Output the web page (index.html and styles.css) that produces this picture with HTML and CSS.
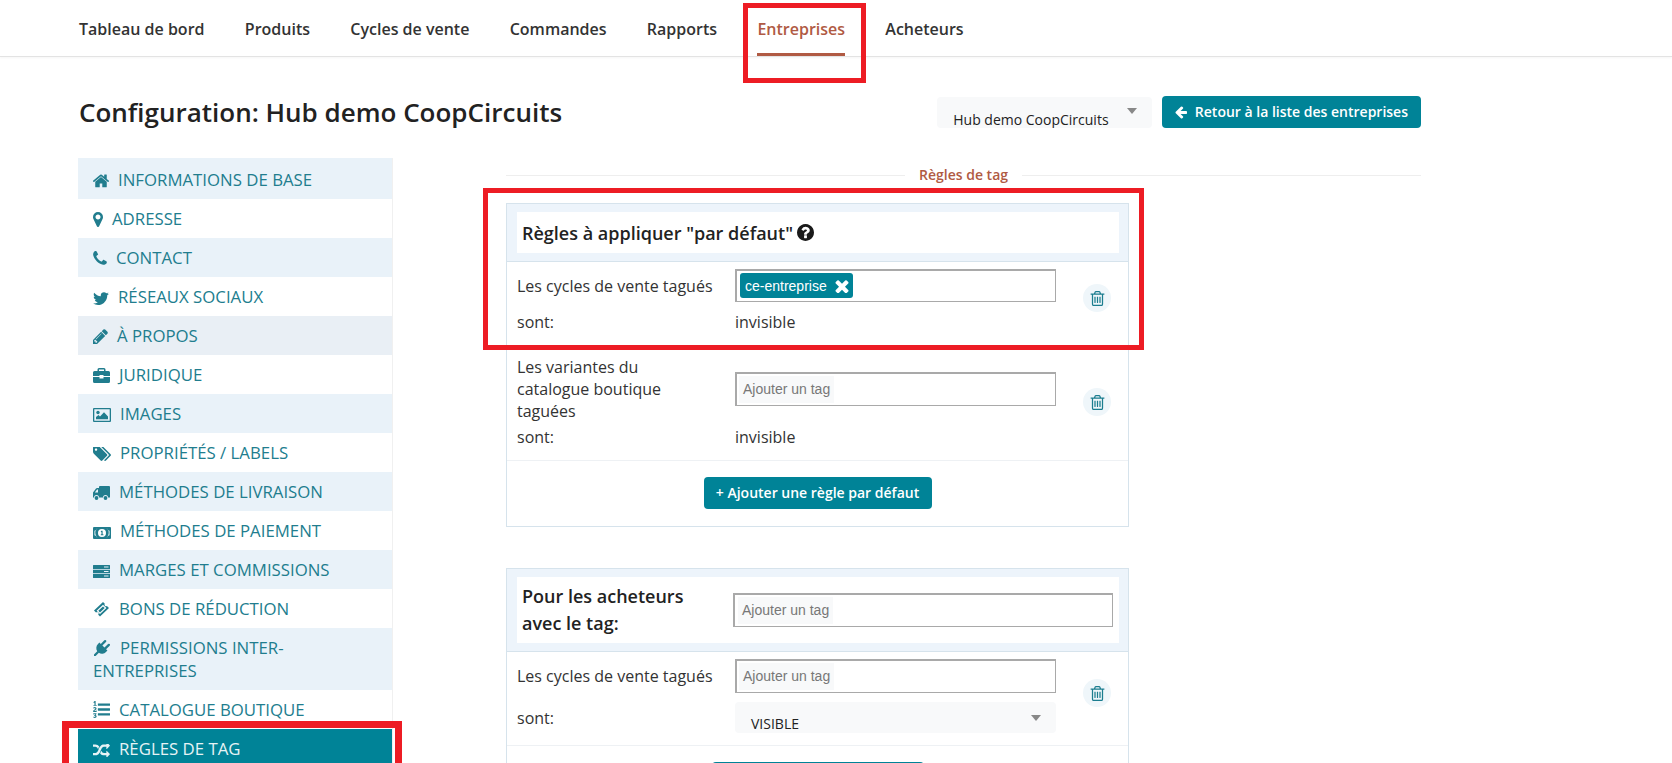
FILE: index.html
```html
<!DOCTYPE html>
<html lang="fr">
<head>
  <meta charset="UTF-8" />
  <meta name="viewport" content="width=device-width, initial-scale=1.0"/>
  <title>Configuration: Hub demo CoopCircuits</title>
  <link rel="stylesheet" href="styles.css">
</head>
<body>

  <nav class="topnav">
    <a href="#">Tableau de bord</a>
    <a href="#">Produits</a>
    <a href="#">Cycles de vente</a>
    <a href="#">Commandes</a>
    <a href="#">Rapports</a>
    <a href="#" class="active">Entreprises</a>
    <a href="#">Acheteurs</a>
  </nav>

  <div class="page">
    <div class="page-head">
      <h1>Configuration: Hub demo CoopCircuits</h1>
      <div class="select select-hub">Hub demo CoopCircuits<span class="caret"></span></div>
      <a href="#" class="btn btn-back">
        <svg width="14" height="14" viewBox="0 0 1792 1792"><path fill="currentColor" d="M1664 896v128q0 53-32.500 90.500t-84.500 37.500h-704l293 294q38 36 38 90t-38 90l-75 76q-37 37-90 37-52 0-91-37l-651-652q-37-37-37-90 0-52 37-91l651-650q38-38 91-38 52 0 90 38l75 74q38 38 38 91t-38 91l-293 293h704q52 0 84.500 37.500t32.500 90.500z"/></svg>
        Retour à la liste des entreprises
      </a>
    </div>

    <div class="columns">
      <ul class="sidemenu">
        <li><a href="#"><svg class="ico" width="16" height="14" viewBox="96 200 1600 1400"><path d="M1472 992v480q0 26-19 45t-45 19h-384v-384h-256v384h-384q-26 0-45-19t-19-45v-480q0-1 .5-3t.5-3l575-474 575 474q1 2 1 6zm223-69l-62 74q-8 9-21 11h-3q-13 0-21-7l-692-577-692 577q-12 8-24 7-13-2-21-11l-62-74q-8-10-7-23.500t11-21.500l719-599q32-26 76-26t76 26l244 204v-195q0-14 9-23t23-9h192q14 0 23 9t9 23v408l219 182q10 8 11 21.500t-7 23.500z"/></svg>Informations de base</a></li>
        <li><a href="#"><svg class="ico" width="10" height="15" viewBox="384 128 1024 1536"><path d="M1152 640q0-106-75-181t-181-75-181 75-75 181 75 181 181 75 181-75 75-181zm256 0q0 109-33 179l-364 774q-16 33-47.500 52t-67.500 19-67.500-19-46.500-52l-365-774q-33-70-33-179 0-212 150-362t362-150 362 150 150 362z"/></svg>Adresse</a></li>
        <li><a href="#"><svg class="ico" width="14" height="15" viewBox="192 128 1408 1536"><path d="M1600 1240q0 27-10 70.500t-21 68.500q-21 50-122 106-94 51-186 51-27 0-53-3.500t-57.500-12.500-47-14.500-55.500-20.500-49-18q-98-35-175-83-127-79-264-216t-216-264q-48-77-83-175-3-9-18-49t-20.500-55.500-14.500-47-12.500-57.500-3.500-53q0-92 51-186 56-101 106-122 25-11 68.500-21t70.500-10q14 0 21 3 18 6 53 76 11 19 30 54t35 63.500 31 53.500q3 4 17.500 25t21.500 35.500 7 28.500q0 20-28.500 50t-62 55-62 53-28.500 46q0 9 5 22.500t8.500 20.500 14 24 11.500 19q76 137 174 235t235 174q2 1 19 11.500t24 14 20.500 8.500 22.500 5q18 0 46-28.500t53-62 55-62 50-28.500q14 0 28.500 7t35.500 21.500 25 17.500q25 15 53.500 31t63.500 35 54 30q70 35 76 53 3 7 3 21z"/></svg>Contact</a></li>
        <li><a href="#"><svg class="ico" width="16" height="13" viewBox="100 240 1600 1300"><path d="M1684 408q-67 98-162 167 1 14 1 42 0 130-38 259.500t-115.500 248.500-184.500 210.500-258 146-323 54.500q-271 0-496-145 35 4 78 4 225 0 401-138-105-2-188-64.500t-114-159.500q33 5 61 5 43 0 85-11-112-23-185.500-111.500t-73.500-205.500v-4q68 38 146 41-66-44-105-115t-39-154q0-88 44-163 121 149 294.500 238.500t371.500 99.500q-8-38-8-74 0-134 94.500-228.500t228.500-94.500q140 0 236 102 109-21 205-78-37 115-142 178 91-10 186-50z"/></svg>Réseaux sociaux</a></li>
        <li class="hover"><a href="#"><svg class="ico" width="15" height="15" viewBox="128 128 1536 1536"><path d="M491 1536l91-91-235-235-91 91v107h128v128h107zm523-928q0-22-22-22-10 0-17 7l-542 542q-7 7-7 17 0 22 22 22 10 0 17-7l542-542q7-7 7-17zm-54-192l416 416-832 832h-416v-416zm683 96q0 53-37 90l-166 166-416-416 166-165q36-38 90-38 53 0 91 38l235 234q37 39 37 91z"/></svg>À propos</a></li>
        <li><a href="#"><svg class="ico" width="17" height="15" viewBox="0 0 17 15"><path d="M6 0h5a1.500 1.500 0 0 1 1.500 1.500V3H11V1.500H6V3H4.500V1.500A1.500 1.500 0 0 1 6 0zM1.500 3h14A1.500 1.500 0 0 1 17 4.500V8H10.500V7h-4v1H0V4.500A1.500 1.500 0 0 1 1.500 3zM0 9h6.500v1.500h4V9H17v4.500a1.500 1.500 0 0 1-1.500 1.500h-14A1.500 1.500 0 0 1 0 13.500z"/></svg>Juridique</a></li>
        <li><a href="#"><svg class="ico" width="18" height="14" viewBox="0 0 18 14"><path fill-rule="evenodd" d="M1 0h16a1 1 0 0 1 1 1v12a1 1 0 0 1-1 1H1a1 1 0 0 1-1-1V1a1 1 0 0 1 1-1zM1.300 1.300v11.400h15.400V1.300z"/><circle cx="5" cy="4.500" r="1.700"/><path d="M3 11.300V9l2.500-2 1.500 1.500 4-4.300 4 4.300v2.800z"/></svg>Images</a></li>
        <li><a href="#"><svg class="ico" width="18" height="14" viewBox="0 192 1900 1450"><path d="M448 448q0-53-37.500-90.500t-90.500-37.500-90.500 37.500-37.500 90.500 37.500 90.500 90.500 37.500 90.500-37.500 37.500-90.500zm1067 576q0 53-37 90l-491 492q-39 37-91 37-53 0-90-37l-715-716q-38-37-64.500-101t-26.500-117v-416q0-52 38-90t90-38h416q53 0 117 26.500t102 64.500l715 714q37 39 37 91zm384 0q0 53-37 90l-491 492q-39 37-91 37-36 0-59-14t-53-45l470-470q37-37 37-90 0-52-37-91l-715-714q-38-38-102-64.500t-117-26.500h224q53 0 117 26.500t102 64.500l715 714q37 39 37 91z"/></svg>Propriétés / Labels</a></li>
        <li><a href="#"><svg class="ico" width="17" height="14" viewBox="0 0 17 14"><path fill-rule="evenodd" d="M7 0h9a1 1 0 0 1 1 1v10.500h-2a2.500 2.500 0 0 0-5 0H6a2.500 2.500 0 0 0-5 0H0V6.500l3-4A1.500 1.500 0 0 1 4.200 2H6V1a1 1 0 0 1 1-1zM5 3.500H4.100L2 6.300v.2h3z"/><circle cx="3.500" cy="12" r="1.900"/><circle cx="12.500" cy="12" r="1.900"/></svg>Méthodes de livraison</a></li>
        <li><a href="#"><svg class="ico" width="18" height="12" viewBox="0 0 18 12"><path fill-rule="evenodd" d="M1 0h16a1 1 0 0 1 1 1v10a1 1 0 0 1-1 1H1a1 1 0 0 1-1-1V1a1 1 0 0 1 1-1zM9 2a4 4 0 1 0 0 8 4 4 0 0 0 0-8zM1.500 3.800v4.400A3 3 0 0 1 4 10.500h.3A6 6 0 0 1 4.300 1.500H4a3 3 0 0 1-2.500 2.300zm15 4.400V3.800A3 3 0 0 1 14 1.500h-.3a6 6 0 0 1 0 9h.3a3 3 0 0 1 2.500-2.300z"/><path d="M8.300 3.800h1.300v3.500h.8v1H7.800v-1h.7V5l-.4.2-.4-.8z"/></svg>Méthodes de paiement</a></li>
        <li><a href="#"><svg class="ico" width="17" height="13" viewBox="0 0 17 13"><path fill-rule="evenodd" d="M.5 0h16a.5.5 0 0 1 .5.500V4H0V.5A.5.5 0 0 1 .5 0zM0 4.800h17v3.400H0zM0 9h17v3.500a.5.5 0 0 1-.5.500H.5a.5.5 0 0 1-.5-.5zM11 1.500v1h4.500v-1zM11 6v1h4.500V6zM11 10.500v1h4.500v-1z"/></svg>Marges et commissions</a></li>
        <li><a href="#"><svg class="ico" width="17" height="15" viewBox="0 0 17 15"><path fill-rule="evenodd" d="M10 0l1.800 1.800a1.500 1.500 0 0 0 2.100 2.100L16 6l-9 8.500-1.800-1.800a1.500 1.500 0 0 0-2.200-2.100L1 8.500zM10 2.800L3.600 8.800 7 12l6.400-6z"/><path d="M10 4.400L5.300 8.800 7 10.400 11.700 6z"/></svg>Bons de réduction</a></li>
        <li><a href="#"><svg class="ico" width="18" height="16" viewBox="0 0 1792 1792"><path d="M1755 453q37 38 37 90.500t-37 90.500l-401 400 150 150-160 160q-163 163-389.500 186.500t-411.500-100.500l-362 362h-181v-181l362-362q-124-185-100.500-411.500t186.500-389.500l160-160 150 150 400-401q38-37 91-37t90 37 37 90.500-37 90.500l-400 401 234 234 401-400q38-37 91-37t90 37z"/></svg>Permissions inter-entreprises</a></li>
        <li><a href="#"><svg class="ico" width="17" height="17" viewBox="0 0 1792 1792"><path d="M381 1620q0 80-54.500 126t-135.500 46q-106 0-172-66l57-88q49 45 106 45 29 0 50.500-14.500t21.500-42.500q0-64-105-56l-26-56q8-10 32.500-43.500t42.500-54 37-38.500v-1q-16 0-48.500 1t-48.500 1v53h-106v-152h333v88l-95 115q51 12 81 49t30 88zm2-627v159h-362q-6-36-6-54 0-51 23.500-93t56.500-68 66-47.500 56.500-43.500 23.500-45q0-25-14.500-38.500t-39.500-13.500q-46 0-81 58l-85-59q24-51 71.500-79.500t105.500-28.500q73 0 123 41.500t50 112.500q0 50-34 91.500t-75 64.500-75.500 50.500-35.500 52.500h127v-60h105zm1409 319v192q0 13-9.500 22.500t-22.500 9.500h-1216q-13 0-22.500-9.500t-9.500-22.500v-192q0-14 9-23t23-9h1216q13 0 22.500 9.500t9.500 22.500zm-1408-899v99h-335v-99h107q0-41 .5-121.500t.5-121.500v-12h-2q-8 17-50 54l-71-76 136-127h106v404h108zm1408 387v192q0 13-9.500 22.500t-22.500 9.500h-1216q-13 0-22.500-9.500t-9.500-22.500v-192q0-14 9-23t23-9h1216q13 0 22.500 9.500t9.500 22.500zm0-512v192q0 13-9.500 22.500t-22.500 9.500h-1216q-13 0-22.500-9.500t-9.500-22.500v-192q0-14 9-23t23-9h1216q13 0 22.500 9.500t9.500 22.500z"/></svg>Catalogue boutique</a></li>
        <li class="current"><a href="#"><svg class="ico" width="17" height="13" viewBox="0 240 1792 1312"><path d="M666 481q-60 92-137 273-22-45-37-72.500t-40.500-63.500-51-56.500-63-35-81.500-14.500h-224q-14 0-23-9t-9-23v-192q0-14 9-23t23-9h224q250 0 410 225zm1126 799q0 14-9 23l-320 320q-9 9-23 9-13 0-22.500-9.500t-9.500-22.500v-192q-32 0-85 .5t-81 1-73-1-71-5-64-10.500-63-18.500-58-28.500-59-40-55-53.500-56-69q59-93 136-273 22 45 37 72.500t40.500 63.500 51 56.500 63 35 81.500 14.500h256v-192q0-14 9-23t23-9q12 0 24 10l319 319q9 9 9 23zm0-896q0 14-9 23l-320 320q-9 9-23 9-13 0-22.500-9.500t-9.500-22.500v-192h-256q-48 0-87 15t-69 45-51 61.500-45 77.500q-32 62-78 171-29 66-49.500 111t-54 105-64 100-74 83-90 68.500-106.500 42-128 16.500h-224q-14 0-23-9t-9-23v-192q0-14 9-23t23-9h224q48 0 87-15t69-45 51-61.500 45-77.500q32-62 78-171 29-66 49.500-111t54-105 64-100 74-83 90-68.500 106.500-42 128-16.500h256v-192q0-14 9-23t23-9q12 0 24 10l319 319q9 9 9 23z"/></svg>Règles de tag</a></li>
      </ul>

      <main class="content">
        <div class="section-title"><span>Règles de tag</span></div>

        <section class="panel">
          <header class="panel-head">
            <div class="panel-title">
              <h3>Règles à appliquer "par défaut"</h3>
              <svg class="help" width="17" height="17" viewBox="128 128 1536 1536"><path d="M1024 1376v-192q0-14-9-23t-23-9h-192q-14 0-23 9t-9 23v192q0 14 9 23t23 9h192q14 0 23-9t9-23zm256-672q0-88-55.500-163t-138.500-116-170-41q-243 0-371 213-15 24 8 42l132 100q7 6 19 6 16 0 25-12 53-68 86-92 34-24 86-24 48 0 85.500 26t37.500 59q0 38-20 61t-68 45q-63 28-115.500 86.500t-52.500 125.500v36q0 14 9 23t23 9h192q14 0 23-9t9-23q0-19 21.500-49.500t54.500-49.500q32-18 49-28.500t46-35 44.500-48 28-60.500 12.500-81zm384 192q0 209-103 385.500t-279.500 279.500-385.500 103-385.500-103-279.500-279.500-103-385.500 103-385.500 279.500-279.500 385.500-103 385.500 103 279.500 279.500 103 385.500z"/></svg>
            </div>
          </header>

          <div class="rule">
            <div class="rule-fields">
              <div class="field">
                <label>Les cycles de vente tagués</label>
                <div class="tag-input tag-input-filled">
                  <span class="tag">ce-entreprise
                    <svg width="14" height="14" viewBox="256 256 1280 1280"><path fill="#fff" d="M1490 1322q0 40-28 68l-136 136q-28 28-68 28t-68-28l-294-294-294 294q-28 28-68 28t-68-28l-136-136q-28-28-28-68t28-68l294-294-294-294q-28-28-28-68t28-68l136-136q28-28 68-28t68 28l294 294 294-294q28-28 68-28t68 28l136 136q28 28 28 68t-28 68l-294 294 294 294q28 28 28 68z"/></svg>
                  </span>
                </div>
              </div>
              <div class="field field-state">
                <label>sont:</label>
                <span>invisible</span>
              </div>
            </div>
            <button class="trash"><svg width="15" height="15" viewBox="128 128 1536 1536"><path d="M704 736v576q0 14-9 23t-23 9h-64q-14 0-23-9t-9-23v-576q0-14 9-23t23-9h64q14 0 23 9t9 23zm256 0v576q0 14-9 23t-23 9h-64q-14 0-23-9t-9-23v-576q0-14 9-23t23-9h64q14 0 23 9t9 23zm256 0v576q0 14-9 23t-23 9h-64q-14 0-23-9t-9-23v-576q0-14 9-23t23-9h64q14 0 23 9t9 23zm128 724v-948h-896v948q0 22 7 40.500t14.500 27 10.500 8.500h832q3 0 10.500-8.500t14.500-27 7-40.500zm-672-1076h448l-48-117q-7-9-17-11h-317q-10 2-17 11zm928 32v64q0 14-9 23t-23 9h-96v948q0 83-47 143.500t-113 60.500h-832q-66 0-113-58.500t-47-141.500v-952h-96q-14 0-23-9t-9-23v-64q0-14 9-23t23-9h309l70-167q15-37 54-63t79-26h320q40 0 79 26t54 63l70 167h309q14 0 23 9t9 23z"/></svg></button>
          </div>

          <div class="rule rule-tall">
            <div class="rule-fields">
              <div class="field">
                <label>Les variantes du catalogue boutique taguées</label>
                <div class="tag-input"><span class="placeholder">Ajouter un tag</span></div>
              </div>
              <div class="field field-state">
                <label>sont:</label>
                <span>invisible</span>
              </div>
            </div>
            <button class="trash"><svg width="15" height="15" viewBox="128 128 1536 1536"><path d="M704 736v576q0 14-9 23t-23 9h-64q-14 0-23-9t-9-23v-576q0-14 9-23t23-9h64q14 0 23 9t9 23zm256 0v576q0 14-9 23t-23 9h-64q-14 0-23-9t-9-23v-576q0-14 9-23t23-9h64q14 0 23 9t9 23zm256 0v576q0 14-9 23t-23 9h-64q-14 0-23-9t-9-23v-576q0-14 9-23t23-9h64q14 0 23 9t9 23zm128 724v-948h-896v948q0 22 7 40.500t14.500 27 10.500 8.500h832q3 0 10.500-8.500t14.500-27 7-40.500zm-672-1076h448l-48-117q-7-9-17-11h-317q-10 2-17 11zm928 32v64q0 14-9 23t-23 9h-96v948q0 83-47 143.500t-113 60.500h-832q-66 0-113-58.500t-47-141.500v-952h-96q-14 0-23-9t-9-23v-64q0-14 9-23t23-9h309l70-167q15-37 54-63t79-26h320q40 0 79 26t54 63l70 167h309q14 0 23 9t9 23z"/></svg></button>
          </div>

          <div class="panel-foot">
            <a href="#" class="btn">+ Ajouter une règle par défaut</a>
          </div>
        </section>

        <section class="panel panel-second">
          <header class="panel-head">
            <div class="panel-title panel-title-form">
              <h3>Pour les acheteurs avec le tag:</h3>
              <div class="tag-input tag-input-wide"><span class="placeholder">Ajouter un tag</span></div>
            </div>
          </header>

          <div class="rule">
            <div class="rule-fields">
              <div class="field">
                <label>Les cycles de vente tagués</label>
                <div class="tag-input"><span class="placeholder">Ajouter un tag</span></div>
              </div>
              <div class="field field-state">
                <label>sont:</label>
                <div class="select select-state">VISIBLE<span class="caret"></span></div>
              </div>
            </div>
            <button class="trash"><svg width="15" height="15" viewBox="128 128 1536 1536"><path d="M704 736v576q0 14-9 23t-23 9h-64q-14 0-23-9t-9-23v-576q0-14 9-23t23-9h64q14 0 23 9t9 23zm256 0v576q0 14-9 23t-23 9h-64q-14 0-23-9t-9-23v-576q0-14 9-23t23-9h64q14 0 23 9t9 23zm256 0v576q0 14-9 23t-23 9h-64q-14 0-23-9t-9-23v-576q0-14 9-23t23-9h64q14 0 23 9t9 23zm128 724v-948h-896v948q0 22 7 40.500t14.500 27 10.500 8.500h832q3 0 10.500-8.500t14.500-27 7-40.500zm-672-1076h448l-48-117q-7-9-17-11h-317q-10 2-17 11zm928 32v64q0 14-9 23t-23 9h-96v948q0 83-47 143.500t-113 60.500h-832q-66 0-113-58.500t-47-141.500v-952h-96q-14 0-23-9t-9-23v-64q0-14 9-23t23-9h309l70-167q15-37 54-63t79-26h320q40 0 79 26t54 63l70 167h309q14 0 23 9t9 23z"/></svg></button>
          </div>

          <div class="panel-foot">
            <a href="#" class="btn btn-cut"></a>
          </div>
        </section>
      </main>
    </div>
  </div>

  <div class="mark mark-nav"></div>
  <div class="mark mark-rule"></div>
  <div class="mark mark-side"></div>

</body>
</html>
```

FILE: styles.css
```css
html, body {
  height: 763px;
  overflow: hidden;
}

body {
  margin: 0;
  font-family: 'Open Sans', sans-serif;
  font-size: 16px;
  color: #222;
  background: #fff;
  position: relative;
}

a {
  text-decoration: none;
  color: inherit;
}

/* top bar */
.topnav {
  display: flex;
  gap: 40.300px;
  height: 57px;
  padding-left: 79px;
  border-bottom: 1px solid #e3e3e3;
  box-shadow: 0 1px 2px rgba(0, 0, 0, 0.04);
  box-sizing: border-box;
}

.topnav a {
  font-size: 16px;
  font-weight: 600;
  line-height: 59px;
  color: #333;
  height: 56px;
  box-sizing: border-box;
}

.topnav a.active {
  color: #b05a43;
  border-bottom: 3px solid #b05a43;
}

/* page */
.page {
  width: 1343px;
  margin-left: 78px;
}

.page-head {
  display: flex;
  align-items: flex-start;
  height: 101px;
  box-sizing: border-box;
  padding-top: 39px;
}

h1 {
  margin: 0 0 0 1px;
  font-size: 26px;
  font-weight: 600;
  line-height: 32px;
  color: #222;
  flex: 1;
}

.select {
  position: relative;
  background: #f8f9fa;
  border-radius: 4px;
  box-sizing: border-box;
  font-size: 14px;
  color: #222;
}

.select-hub {
  width: 215px;
  height: 31px;
  margin-top: 1px;
  padding: 12px 0 0 16px;
  line-height: 22px;
  overflow: hidden;
}

.caret {
  position: absolute;
  right: 15px;
  top: 11px;
  border-style: solid;
  border-width: 6px 5px 0;
  border-color: #888 transparent transparent;
}

.btn {
  display: inline-block;
  height: 32px;
  box-sizing: border-box;
  padding: 0 13px;
  line-height: 31px;
  background: #008397;
  color: #fff;
  font-size: 14px;
  font-weight: 600;
  border-radius: 4px;
}

.btn-back {
  margin-left: 10px;
  padding-left: 12px;
}

.btn-back svg {
  vertical-align: -2px;
  margin-right: 3px;
}

.columns {
  display: flex;
}

/* side menu */
.sidemenu {
  width: 315px;
  margin: 0;
  padding: 0;
  list-style: none;
  border-right: 1px solid #f0f0f0;
  box-sizing: border-box;
  flex: none;
}

.sidemenu li:nth-child(odd) {
  background: #e9f2f9;
}

.sidemenu li.hover {
  background: #e9eff5;
}

.sidemenu a {
  display: block;
  padding: 8px 15px;
  font-size: 16.800px;
  line-height: 23px;
  text-transform: uppercase;
  color: #217d8e;
}

.sidemenu li:first-child a {
  padding-top: 10px;
}

.ico {
  fill: currentColor;
  vertical-align: -2px;
  margin-right: 9px;
}

.sidemenu li.current {
  background: #008397;
}

.sidemenu li.current a {
  color: #e6f3f5;
}

/* right column */
.content {
  width: 915px;
  margin-left: 113px;
}

.section-title {
  position: relative;
  height: 45px;
  text-align: center;
  font-size: 14px;
  font-weight: 600;
  line-height: 34px;
  color: #b05a43;
}

.section-title::before {
  content: "";
  position: absolute;
  left: 0;
  right: 0;
  top: 17px;
  border-top: 1px solid #eee;
}

.section-title span {
  position: relative;
  background: #fff;
  padding: 0 14px;
}

.panel {
  width: 623px;
  border: 1px solid #d6e3ec;
  box-sizing: border-box;
}

.panel-second {
  margin-top: 41px;
}

.panel-head {
  background: #edf4fb;
  padding: 8px 9px 8px 10px;
  border-bottom: 1px solid #d6e3ec;
}

.panel-title {
  display: flex;
  align-items: center;
  background: #fff;
  padding-left: 5px;
  height: 41px;
}

.panel-title h3 {
  margin: 0;
  font-size: 18px;
  font-weight: 600;
  color: #222;
}

.help {
  margin-left: 4px;
  fill: #1a1a1a;
}

.panel-title-form {
  height: 66px;
}

.panel-title-form h3 {
  width: 211px;
  padding-right: 40px;
  box-sizing: border-box;
  line-height: 27px;
  flex: none;
}

/* rules */
.rule {
  display: flex;
  align-items: center;
  padding: 7px 0 12px 10px;
  border-bottom: 1px solid #eef1f4;
}

.rule-tall {
  padding-top: 10px;
}

.rule-fields {
  width: 539px;
}

.field {
  display: flex;
  align-items: center;
  line-height: 22px;
  font-size: 16px;
  color: #333;
}

.field label {
  width: 218px;
  box-sizing: border-box;
  flex: none;
}

.rule-tall .field label {
  padding-right: 50px;
}

.field-state {
  margin-top: 9px;
}

.rule-tall .field-state {
  margin-top: 4px;
}

.tag-input {
  width: 321px;
  height: 34px;
  box-sizing: border-box;
  border: 1px solid #a9a9a9;
  border-top-width: 2px;
  border-left-width: 2px;
  background: #fff;
  display: flex;
  align-items: center;
  padding-left: 2px;
  flex: none;
}

.tag-input-filled {
  height: 33px;
}

.tag-input-wide {
  width: 380px;
  padding-left: 3px;
}

.placeholder {
  font-family: 'Liberation Sans', sans-serif;
  font-size: 14px;
  color: #777;
  background: #f8f9fa;
  padding: 5px 4px;
  line-height: 17px;
}

.tag {
  display: inline-flex;
  align-items: center;
  height: 25px;
  padding: 0 0 0 5px;
  width: 113px;
  box-sizing: border-box;
  background: #008397;
  border-radius: 3px;
  color: #fff;
  font-family: 'Liberation Sans', sans-serif;
  font-size: 14px;
  margin-left: 1px;
  margin-bottom: 1px;
  gap: 8px;
}

.trash {
  width: 28px;
  height: 28px;
  margin: 0 0 6px 27px;
  padding: 0;
  border: none;
  border-radius: 50%;
  background: #eff6fa;
  display: flex;
  align-items: center;
  justify-content: center;
  fill: #1b7d8f;
}

.rule-tall .trash {
  margin-bottom: 0;
}

.panel-foot {
  display: flex;
  justify-content: center;
  padding: 16px 0 17px;
}

.panel-foot .btn {
  width: 228px;
  text-align: center;
  padding: 0;
}

.panel-foot .btn-cut {
  width: 212px;
}

.select-state {
  width: 321px;
  height: 31px;
  padding: 11px 0 0 16px;
  line-height: 22px;
  overflow: hidden;
  flex: none;
}

.select-state .caret {
  top: 13px;
}

/* red notes over the page */
.mark {
  position: absolute;
  border: 5px solid #ed1c24;
  box-sizing: border-box;
}

.mark-nav {
  left: 743px;
  top: 3px;
  width: 123px;
  height: 80px;
}

.mark-rule {
  left: 483px;
  top: 188px;
  width: 661px;
  height: 162px;
}

.mark-side {
  left: 62px;
  top: 721px;
  width: 340px;
  height: 60px;
  border-width: 7px;
}
```
